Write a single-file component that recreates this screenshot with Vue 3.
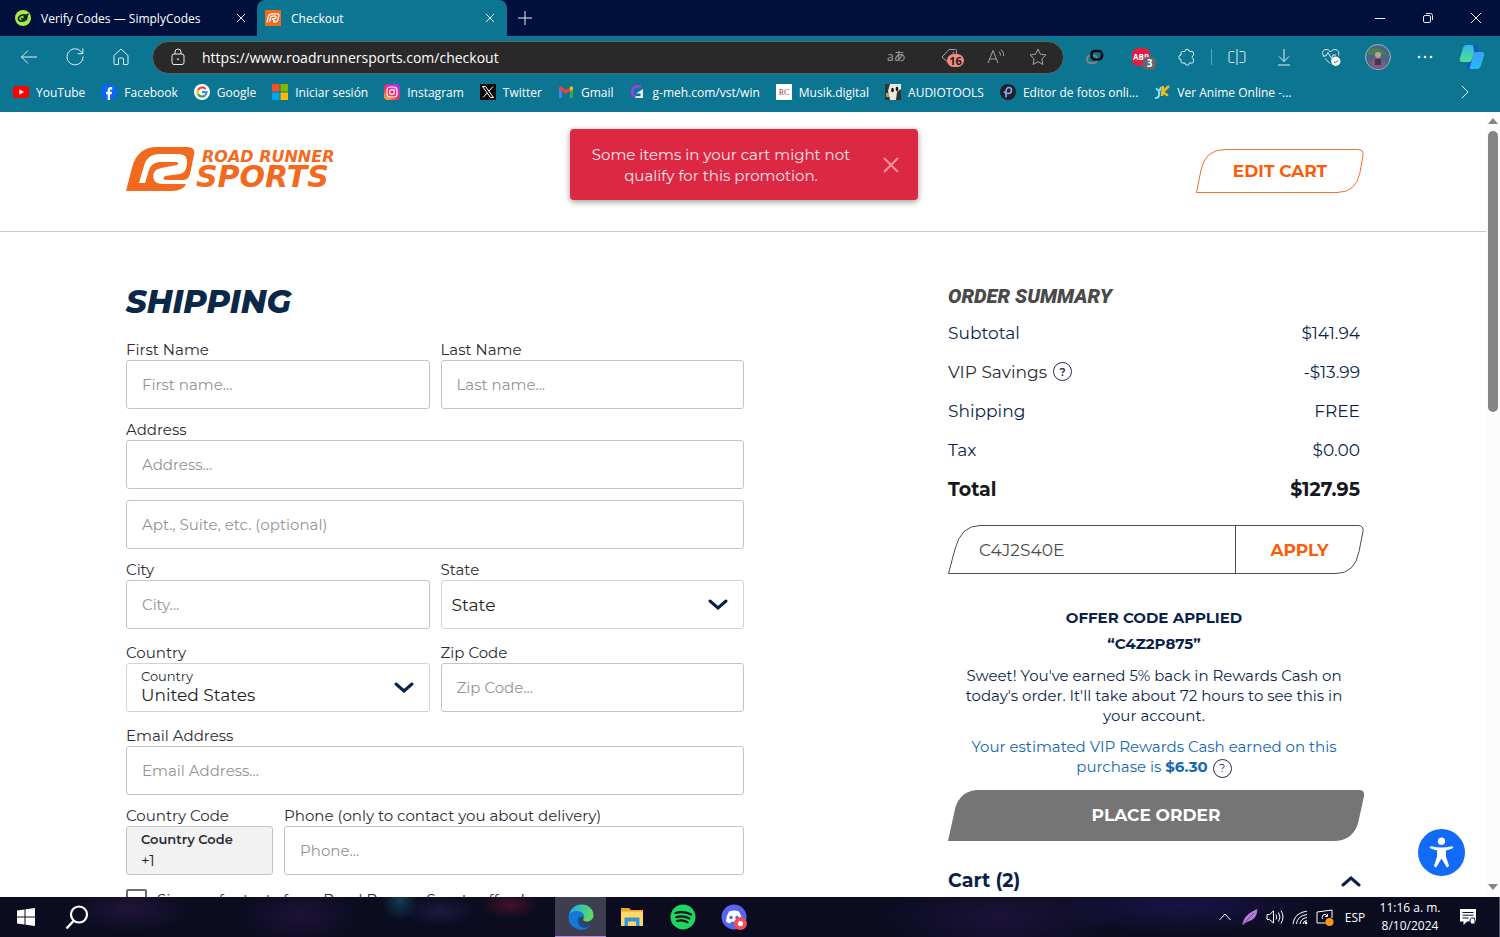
<script setup>
import { ref } from "vue";

// Links on the favourites bar, in display order.
const bookmarks = [
    { id: "youtube", label: "YouTube" },
    { id: "facebook", label: "Facebook" },
    { id: "google", label: "Google" },
    { id: "microsoft", label: "Iniciar sesión" },
    { id: "instagram", label: "Instagram" },
    { id: "x", label: "Twitter" },
    { id: "gmail", label: "Gmail" },
    { id: "gmeh", label: "g-meh.com/vst/win" },
    { id: "musik", label: "Musik.digital" },
    { id: "audio", label: "AUDIOTOOLS" },
    { id: "editor", label: "Editor de fotos onli..." },
    { id: "anime", label: "Ver Anime Online -..." },
];

const summary = [
    { label: "Subtotal", value: "$141.94" },
    { label: "VIP Savings", value: "-$13.99", help: true },
    { label: "Shipping", value: "FREE" },
    { label: "Tax", value: "$0.00" },
];

const url = ref("https://www.roadrunnersports.com/checkout");
const promoCode = ref("C4J2S40E");
const state = ref("State");
const country = ref("United States");
const toastOpen = ref(true);
const cartOpen = ref(true);
</script>

<template>
    <div class="desktop">
        <header class="browser">
            <div class="tabs">
                <div class="tab">
                    <svg class="favicon" viewBox="0 0 16 16">
                        <circle cx="8" cy="8" r="8" fill="#a6ee4f" />
                        <path
                            d="M13.500 4 8.500 7.500M12 6.500C11 4 6 4.500 4 7c-1.500 2 0 4.500 3 4.200 3-.3 5-2.200 5-4.200L7.500 9.500 6 8"
                            fill="none"
                            stroke="#14240a"
                            stroke-width="1.600"
                        />
                    </svg>
                    <span class="tab-title">Verify Codes — SimplyCodes</span>
                    <button class="tab-close" type="button" aria-label="Close tab">
                        <svg viewBox="0 0 10 10"><path d="M1 1l8 8M9 1 1 9" /></svg>
                    </button>
                </div>
                <div class="tab tab-active">
                    <svg class="favicon" viewBox="0 0 16 16">
                        <rect width="16" height="16" fill="#f36a1f" />
                        <path
                            d="M2 12.500 3.200 7C3.700 4.500 5 3.800 7 3.800h5.500c1.300 0 1.600.8 1.300 2l-.7 3.400c-.4 2-1.500 3-3.500 3H8M4.500 12l.9-4c.3-1.300.9-1.800 2-1.800h3c1.300 0 1.100 1.900-.2 2.100L7.500 9l2.500 2.500"
                            fill="none"
                            stroke="#fff"
                            stroke-width="1.200"
                        />
                    </svg>
                    <span class="tab-title">Checkout</span>
                    <button class="tab-close" type="button" aria-label="Close tab">
                        <svg viewBox="0 0 10 10"><path d="M1 1l8 8M9 1 1 9" /></svg>
                    </button>
                </div>
                <button class="tab-new" type="button" aria-label="New tab">
                    <svg viewBox="0 0 14 14"><path d="M7 0v14M0 7h14" /></svg>
                </button>
                <div class="window-controls">
                    <button type="button" aria-label="Minimize">
                        <svg viewBox="0 0 12 12"><path d="M1 6.500h10" /></svg>
                    </button>
                    <button type="button" aria-label="Restore">
                        <svg viewBox="0 0 12 12">
                            <rect x="1.500" y="3.500" width="7" height="7" rx="1.500" />
                            <path d="M4 1.500h4.500a2 2 0 0 1 2 2V8" />
                        </svg>
                    </button>
                    <button type="button" aria-label="Close">
                        <svg viewBox="0 0 12 12"><path d="M1 1l10 10M11 1 1 11" /></svg>
                    </button>
                </div>
            </div>

            <div class="toolbar">
                <button class="nav-btn" type="button" aria-label="Back">
                    <svg viewBox="0 0 20 20"><path d="M18 10H2.500M9 3.500 2.500 10 9 16.500" /></svg>
                </button>
                <button class="nav-btn" type="button" aria-label="Refresh">
                    <svg viewBox="0 0 20 20">
                        <path d="M18 9.500A8 8 0 1 1 15.500 4L17.800 6.500M17.800 1.500v5.200h-5.200" />
                    </svg>
                </button>
                <button class="nav-btn" type="button" aria-label="Home">
                    <svg viewBox="0 0 20 20">
                        <path d="M3 8.500 10 2l7 6.500v8a1 1 0 0 1-1 1h-3.500V12a1 1 0 0 0-1-1h-3a1 1 0 0 0-1 1v5.500H4a1 1 0 0 1-1-1z" />
                    </svg>
                </button>

                <div class="address">
                    <svg class="lock" viewBox="0 0 16 18">
                        <rect x="2" y="6" width="12" height="10.500" rx="2" />
                        <path d="M5 6V4a3 3 0 0 1 6 0v2" />
                        <circle cx="8" cy="11.200" r=".6" />
                    </svg>
                    <input v-model="url" type="text" aria-label="Address bar" />
                    <span class="translate">aあ</span>
                    <button class="address-btn coupons" type="button" aria-label="Coupons">
                        <svg viewBox="0 0 20 20">
                            <path d="M2 10 9 2.500h6.500q1 0 1 1V10L10 17z" />
                            <circle cx="13.500" cy="5.800" r=".6" />
                        </svg>
                        <span class="coupon-count">16</span>
                    </button>
                    <button class="address-btn" type="button" aria-label="Read aloud">
                        <svg viewBox="0 0 20 20">
                            <path d="M2 16 7 3.500 12 16M3.700 12h6.600M13 4.500q1.500 1.500 1.500 4M15 2.500q3 2.500 2.800 6.500" />
                        </svg>
                    </button>
                    <button class="address-btn" type="button" aria-label="Add to favourites">
                        <svg viewBox="0 0 20 20">
                            <path d="m10 2 2.400 5.200 5.600.7-4.100 3.900 1 5.700-4.900-2.800-4.900 2.800 1-5.700L2 7.900l5.600-.7z" />
                        </svg>
                    </button>
                </div>

                <div class="extensions">
                    <button class="ext-btn" type="button" aria-label="Link extension">
                        <svg viewBox="0 0 20 20">
                            <rect x="2" y="8.500" width="10" height="7.500" rx="3.500" stroke="#7b868b" stroke-width="2" />
                            <rect x="6.500" y="4" width="10.500" height="8.500" rx="3.500" stroke="#0a0d12" stroke-width="2.600" />
                        </svg>
                    </button>
                    <button class="ext-btn adblock" type="button" aria-label="Adblock Plus">
                        <span class="adblock-logo">ABP</span>
                        <span class="adblock-count">3</span>
                    </button>
                    <button class="ext-btn" type="button" aria-label="Extensions">
                        <svg viewBox="0 0 20 20">
                            <path d="M8 4.500a2.200 2.200 0 0 1 4.400 0H15a1.500 1.500 0 0 1 1.500 1.500v2.500a1.800 1.800 0 0 0 0 3.500v2.500A1.500 1.500 0 0 1 15 16h-2.600a2.200 2.200 0 0 1-4.400 0H5.500A1.500 1.500 0 0 1 4 14.500v-2a2.200 2.200 0 0 1 0-4.500V6a1.500 1.500 0 0 1 1.500-1.500z" />
                        </svg>
                    </button>
                </div>
                <span class="toolbar-sep"></span>
                <div class="actions">
                    <button class="action-btn" type="button" aria-label="Split screen">
                        <svg viewBox="0 0 20 20">
                            <path d="M10 2v16M7.500 4.500h-4a1.500 1.500 0 0 0-1.500 1.500v8a1.500 1.500 0 0 0 1.500 1.500h4M12.500 4.500h4A1.500 1.500 0 0 1 18 6v8a1.500 1.500 0 0 1-1.500 1.500h-4" />
                        </svg>
                    </button>
                    <button class="action-btn" type="button" aria-label="Downloads">
                        <svg viewBox="0 0 20 20"><path d="M10 2v12.500M5 9.500l5 5 5-5M4 18h12" /></svg>
                    </button>
                    <button class="action-btn" type="button" aria-label="Browser essentials">
                        <svg viewBox="0 0 20 20">
                            <path d="M3 9C0 6 2 2.500 5 2.500 7 2.500 8.500 3.500 9.500 5 10.500 3.500 12 2.500 14 2.500c3 0 4.500 3 3.500 6M1.500 9H5l2-3.500 3.500 6L12 8h3M4 11.500l5 5" />
                            <circle cx="14.800" cy="14.300" r="4.700" fill="#fff" stroke="none" />
                            <path d="m12.700 14.300 1.600 1.600 2.800-2.800" stroke="#0c7592" />
                        </svg>
                    </button>
                    <button class="action-btn" type="button" aria-label="Profile">
                        <svg class="avatar" viewBox="0 0 26 26">
                            <circle cx="13" cy="13" r="12.500" fill="#466683" stroke="#9fb5b3" stroke-width="1" />
                            <path d="M3 7q7-6 16 0l4 4-5-1-4 2-6-2-4 2z" fill="#4f7d57" />
                            <circle cx="13" cy="11" r="3" fill="#b7a68f" />
                            <path d="M4 19q4-6 9-5t9 5q-3 6-9 6t-9-6z" fill="#7b5b7e" />
                            <path d="M10 15h6v6h-6z" fill="#443653" />
                        </svg>
                    </button>
                    <button class="action-btn" type="button" aria-label="Settings and more">
                        <svg class="dots" viewBox="0 0 20 20">
                            <circle cx="4" cy="10" r="1.300" />
                            <circle cx="10" cy="10" r="1.300" />
                            <circle cx="16" cy="10" r="1.300" />
                        </svg>
                    </button>
                    <button class="action-btn" type="button" aria-label="Copilot">
                        <svg class="copilot" viewBox="0 0 26 26">
                            <defs>
                                <linearGradient id="copilot-a" x1="0" y1="0" x2="0" y2="1">
                                    <stop offset="0" stop-color="#31b6ee" />
                                    <stop offset="1" stop-color="#54e08a" />
                                </linearGradient>
                                <linearGradient id="copilot-b" x1="0" y1="0" x2="0" y2="1">
                                    <stop offset="0" stop-color="#3f9cff" />
                                    <stop offset="1" stop-color="#21c0f5" />
                                </linearGradient>
                            </defs>
                            <path d="M7 1h9q2 0 1 3l-4 11q-1 3-3 3H3q-3 0-2-4L4 4q1-3 3-3z" fill="url(#copilot-a)" />
                            <path d="M14 1h2.500q2 0 2.500 3l1 4h-5z" fill="#1555c4" />
                            <path d="M16.500 8H23q3 0 2 4l-3 9q-1 4-4 4h-6q-2 0-1-3l3.500-11q1-3 2-3z" fill="url(#copilot-b)" />
                            <path d="M10 18h2.500L10 25q-3-1-2.500-4z" fill="#1555c4" />
                        </svg>
                    </button>
                </div>
            </div>

            <nav class="bookmarks">
                <a v-for="item in bookmarks" :key="item.id" class="bookmark" href="#">
                    <svg class="favicon" viewBox="0 0 16 16">
                        <template v-if="item.id === 'youtube'">
                            <rect y="2" width="16" height="12" rx="3" fill="#f00" />
                            <path d="M6.300 5.300v5.400L11 8z" fill="#fff" />
                        </template>
                        <template v-else-if="item.id === 'facebook'">
                            <circle cx="8" cy="8" r="8" fill="#0866ff" />
                            <path d="M6.700 16V10.300H5V7.800h1.700V6.500C6.700 4 8 3 9.800 3c.6 0 1 .1 1.400.2v2.200h-1c-1 0-1.200.6-1.200 1.300v1.100h2.100l-.4 2.500H9V16z" fill="#fff" />
                        </template>
                        <template v-else-if="item.id === 'google'">
                            <circle cx="8" cy="8" r="8" fill="#fff" />
                            <g fill="none" stroke-width="2.200">
                                <path d="M11.500 5.100A4.500 4.500 0 0 0 4 6" stroke="#ea4335" />
                                <path d="M4 6a4.500 4.500 0 0 0 0 4" stroke="#fbbc05" />
                                <path d="M4 10a4.500 4.500 0 0 0 7 1.400" stroke="#34a853" />
                                <path d="M11 11.400A4.500 4.500 0 0 0 12.500 8H8" stroke="#4285f4" />
                            </g>
                        </template>
                        <template v-else-if="item.id === 'microsoft'">
                            <path d="M0 0h7.500v7.500H0z" fill="#f25022" />
                            <path d="M8.500 0H16v7.500H8.500z" fill="#7fba00" />
                            <path d="M0 8.500h7.500V16H0z" fill="#00a4ef" />
                            <path d="M8.500 8.500H16V16H8.500z" fill="#ffb900" />
                        </template>
                        <template v-else-if="item.id === 'instagram'">
                            <defs>
                                <linearGradient id="ig" x1="0" y1="1" x2=".7" y2="0">
                                    <stop offset="0" stop-color="#ffd23f" />
                                    <stop offset=".45" stop-color="#fb2d55" />
                                    <stop offset="1" stop-color="#b62be8" />
                                </linearGradient>
                            </defs>
                            <rect width="16" height="16" rx="4" fill="url(#ig)" />
                            <rect x="3" y="3" width="10" height="10" rx="3" fill="none" stroke="#fff" stroke-width="1.200" />
                            <circle cx="8" cy="8" r="2.400" fill="none" stroke="#fff" stroke-width="1.200" />
                            <circle cx="11" cy="5" r=".7" fill="#fff" />
                        </template>
                        <template v-else-if="item.id === 'x'">
                            <rect width="16" height="16" fill="#080808" />
                            <path d="M2.500 2.500h3l8 11h-3zM13 2.500 8.900 7.200M7.200 9 3 13.500" fill="none" stroke="#fff" />
                        </template>
                        <template v-else-if="item.id === 'gmail'">
                            <path d="M1 4v10h3V6z" fill="#4285f4" />
                            <path d="M15 4v10h-3V6z" fill="#34a853" />
                            <path d="M1 5.500V3.500Q2.500 1.500 4 3l4 3 4-3v4L8 10 4 7z" fill="#ea4335" />
                            <path d="M12 7V3q1.800-1.500 3 .5v2z" fill="#fbbc04" />
                        </template>
                        <template v-else-if="item.id === 'gmeh'">
                            <path d="M11 2.500Q4 1 2.500 6.500 1.500 11 5.500 13" fill="none" stroke="#a63be8" stroke-width="2.500" />
                            <path d="M13 5 6 9.500h4.500V12H6l-1 2h8z" fill="#e5eef8" />
                        </template>
                        <template v-else-if="item.id === 'musik'">
                            <rect width="16" height="16" fill="#fff" />
                            <text x="8" y="11" text-anchor="middle" font-family="Liberation Serif, serif" font-size="8" fill="#a0344a">RC</text>
                        </template>
                        <template v-else-if="item.id === 'audio'">
                            <rect width="16" height="16" fill="#e8eadf" />
                            <path d="M0 0h5L3 7l2 9H0zM12 8l4-3v11h-5z" fill="#30352f" />
                            <ellipse cx="7.500" cy="6" rx="1.300" ry="2.200" fill="#101010" />
                            <ellipse cx="12" cy="5" rx="1.300" ry="2.200" fill="#101010" />
                            <path d="M1 9h3v4H1z" fill="#a9a860" />
                        </template>
                        <template v-else-if="item.id === 'editor'">
                            <circle cx="8" cy="8" r="8" fill="#1c2028" />
                            <path d="M6 13.500V8.500Q6 3.500 9 3.500q2.500 0 2.500 2.700Q11.500 9.500 8 9.500q-3 0-4-2" fill="none" stroke="#8fa5ee" stroke-width="1.700" />
                        </template>
                        <template v-else>
                            <path d="M2 4.500 5 7v4q0 3-4 3M7 3 5.500 7" fill="none" stroke="#7fe3ff" stroke-width="2" />
                            <path d="M9 2 8 12M15 2 8.500 8 14 11.500" fill="none" stroke="#f6bd16" stroke-width="2.500" />
                        </template>
                    </svg>
                    {{ item.label }}
                </a>
                <button class="bookmarks-more" type="button" aria-label="More favourites">
                    <svg viewBox="0 0 8 14"><path d="m1 1 6 6-6 6" /></svg>
                </button>
            </nav>
        </header>

        <div class="viewport">
            <div class="page">
                <header class="site-header">
                    <a class="brand" href="#" aria-label="Road Runner Sports">
                        <svg viewBox="0 0 70 46">
                            <path d="M0 45 6 22Q11 1 31 1H61Q70 1 68 9L64 28Q63 33 58 34H41Q35 34 39 30L54 28Q60 27 61 18 62 8 53 8H34Q21 8 18 20L13 37H19L23 24Q25 17 33 16H50Q54 16 51 19L35 22Q25 24 28 34 30 38 37 38H60Q57 45 46 45z" fill="#f26a1e" />
                        </svg>
                        <span class="brand-text">
                            <span class="brand-top">ROAD RUNNER</span>
                            <span class="brand-bottom">SPORTS</span>
                        </span>
                    </a>
                    <button class="slanted edit-cart" type="button">
                        <svg viewBox="0 0 168 44" preserveAspectRatio="none">
                            <path d="M.5 43.500 5 21Q9 .5 29 .5H161q7 0 6 6l-3 17q-4 20-23 20z" />
                        </svg>
                        <span>EDIT CART</span>
                    </button>
                </header>

                <main class="checkout">
                    <form class="shipping" @submit.prevent>
                        <h1>SHIPPING</h1>
                        <div class="row">
                            <div class="field">
                                <label for="first-name">First Name</label>
                                <input id="first-name" type="text" placeholder="First name..." />
                            </div>
                            <div class="field">
                                <label for="last-name">Last Name</label>
                                <input id="last-name" type="text" placeholder="Last name..." />
                            </div>
                        </div>
                        <div class="field">
                            <label for="address">Address</label>
                            <input id="address" type="text" placeholder="Address..." />
                        </div>
                        <div class="field">
                            <input type="text" aria-label="Apartment" placeholder="Apt., Suite, etc. (optional)" />
                        </div>
                        <div class="row row-spaced">
                            <div class="field">
                                <label for="city">City</label>
                                <input id="city" type="text" placeholder="City..." />
                            </div>
                            <div class="field">
                                <label for="state">State</label>
                                <div class="select-box">
                                    <select id="state" v-model="state">
                                        <option>State</option>
                                        <option>California</option>
                                    </select>
                                    <svg class="chevron" viewBox="0 0 20 12"><path d="m2 2 8 7 8-7" /></svg>
                                </div>
                            </div>
                        </div>
                        <div class="row row-spaced">
                            <div class="field">
                                <label for="country">Country</label>
                                <div class="select-box">
                                    <select id="country" v-model="country" class="with-caption">
                                        <option>United States</option>
                                        <option>Canada</option>
                                    </select>
                                    <span class="caption">Country</span>
                                    <svg class="chevron" viewBox="0 0 20 12"><path d="m2 2 8 7 8-7" /></svg>
                                </div>
                            </div>
                            <div class="field">
                                <label for="zip">Zip Code</label>
                                <input id="zip" type="text" placeholder="Zip Code..." />
                            </div>
                        </div>
                        <div class="field">
                            <label for="email">Email Address</label>
                            <input id="email" type="email" placeholder="Email Address..." />
                        </div>
                        <div class="row row-phone row-spaced">
                            <div class="field">
                                <label for="country-code">Country Code</label>
                                <div class="select-box">
                                    <input id="country-code" class="with-caption" type="text" value="+1" disabled />
                                    <span class="caption caption-bold">Country Code</span>
                                </div>
                            </div>
                            <div class="field">
                                <label for="phone">Phone (only to contact you about delivery)</label>
                                <input id="phone" type="tel" placeholder="Phone..." />
                            </div>
                        </div>
                        <label class="texts">
                            <input type="checkbox" />
                            <span>Sign up for texts from Road Runner Sports offers!</span>
                        </label>
                    </form>

                    <aside class="summary">
                        <h2>ORDER SUMMARY</h2>
                        <dl>
                            <div v-for="line in summary" :key="line.label" class="line" :class="{ dark: line.help }">
                                <dt>
                                    {{ line.label }}
                                    <button v-if="line.help" class="help" type="button" aria-label="About VIP savings">?</button>
                                </dt>
                                <dd>{{ line.value }}</dd>
                            </div>
                            <div class="line total">
                                <dt>Total</dt>
                                <dd>$127.95</dd>
                            </div>
                        </dl>

                        <form class="slanted promo" @submit.prevent>
                            <svg viewBox="0 0 416 49" preserveAspectRatio="none">
                                <path d="M.5 48.500 7 24Q13 .5 32 .5H410q6 0 5 6l-4 20q-4 22-23 22zM287.500.5v48" />
                            </svg>
                            <div class="promo-fields">
                                <input v-model="promoCode" type="text" aria-label="Offer code" />
                                <button type="submit">APPLY</button>
                            </div>
                        </form>

                        <p class="offer">OFFER CODE APPLIED<br />“C4Z2P875”</p>
                        <p class="note">
                            Sweet! You've earned 5% back in Rewards Cash on<br />today's order. It'll take about 72
                            hours to see this in<br />your account.
                        </p>
                        <p class="note rewards">
                            Your estimated VIP Rewards Cash earned on this<br />purchase is <b>$6.30</b>
                            <button class="help" type="button" aria-label="About rewards cash">?</button>
                        </p>

                        <button class="slanted place-order" type="button">
                            <svg viewBox="0 0 416 51" preserveAspectRatio="none">
                                <path d="M0 51 7 19Q12 0 31 0H411q6 0 5 6l-5 23q-4 22-26 22z" />
                            </svg>
                            <span>PLACE ORDER</span>
                        </button>

                        <button class="cart-toggle" type="button" :aria-expanded="cartOpen" @click="cartOpen = !cartOpen">
                            Cart (2)
                            <svg class="chevron" viewBox="0 0 20 12"><path d="m2 10 8-7 8 7" /></svg>
                        </button>
                    </aside>
                </main>
            </div>

            <div class="scrollbar">
                <svg viewBox="0 0 10 6"><path d="M0 6 5 0l5 6z" /></svg>
                <span class="thumb"></span>
                <svg viewBox="0 0 10 6"><path d="M0 0h10L5 6z" /></svg>
            </div>

            <div v-if="toastOpen" class="toast" role="alert">
                <p>Some items in your cart might not<br />qualify for this promotion.</p>
                <button type="button" aria-label="Dismiss" @click="toastOpen = false">
                    <svg viewBox="0 0 16 16"><path d="m1 1 14 14M15 1 1 15" /></svg>
                </button>
            </div>

            <button class="accessibility" type="button" aria-label="Accessibility options">
                <svg viewBox="0 0 48 48">
                    <circle cx="24" cy="12.500" r="3.700" />
                    <path d="M13.500 17.500q10.500 3 21 0 1.800 0 1.500 2-2.500 1.500-7.500 2.500v6l3 9q.3 2-2 2.200l-5.500-9-5.500 9q-2.300-.2-2-2.200l3-9v-6q-5-1-7.500-2.500-.3-2 1.500-2z" />
                </svg>
            </button>
        </div>

        <footer class="taskbar">
            <button class="task" type="button" aria-label="Start">
                <svg class="start" viewBox="0 0 18 18">
                    <path d="M0 2.500 7.500 1.500V8.500H0zM8.500 1.300 18 0v8.500H8.500zM0 9.500h7.500v7L0 15.500zM8.500 9.500H18V18l-9.500-1.300z" fill="#fff" />
                </svg>
            </button>
            <button class="task" type="button" aria-label="Search">
                <svg viewBox="0 0 26 26">
                    <circle cx="15" cy="10.500" r="8" fill="none" stroke="#fff" stroke-width="2.200" />
                    <path d="M9.500 17 2.500 24.500" fill="none" stroke="#fff" stroke-width="2.500" />
                </svg>
            </button>
            <div class="apps">
                <button class="task task-active" type="button" aria-label="Microsoft Edge">
                    <svg viewBox="0 0 26 26">
                        <defs>
                            <linearGradient id="edge-top" x1="0" y1=".3" x2="1" y2=".5">
                                <stop offset="0" stop-color="#23a7e8" />
                                <stop offset="1" stop-color="#5fe05b" />
                            </linearGradient>
                        </defs>
                        <path d="M1 12C1.500 5 7 .5 13.500.5 20.500.5 25.500 5.500 25.500 11c0 4-3 6.500-7 6.500-3 0-4-1.500-3-3 1.500-3-.5-5.500-4-5.500S3 9.500 1 12z" fill="url(#edge-top)" />
                        <path d="M.5 14.500C0 9 5 6.500 10 7c4.500.5 6.500 4 5.500 7-3-3-6 0-4 4.500 2 4 7 5 11.500 2C19.500 26 13 27 8 24.500 3.500 22.500 1 19 .5 14.500z" fill="#1479d4" />
                        <path d="M11.500 12.500c-3 3-2 8 1.500 10.500 3 2 7.500.5 10-2.500-4.500 2.500-9.500 1-11-2.500-.9-2-.8-4-.5-5.500z" fill="#0c4fa5" />
                    </svg>
                </button>
                <button class="task" type="button" aria-label="File Explorer">
                    <svg viewBox="0 0 26 26">
                        <path d="M2 4h8l2 2h12v5H2z" fill="#e9a724" />
                        <path d="M2 7.500h22V22H2z" fill="#ffd766" />
                        <path d="M5.500 22v-8.500h15V22H17v-4.500H9V22z" fill="#3693d6" />
                    </svg>
                </button>
                <button class="task" type="button" aria-label="Spotify">
                    <svg viewBox="0 0 26 26">
                        <circle cx="13" cy="13" r="12.500" fill="#1ed760" />
                        <path d="M5.500 9q8-2.300 15.500 1.500M6.300 13.200q6.700-2 13 1.300M7 17q5.500-1.500 10.500 1.200" fill="none" stroke="#10151f" stroke-width="2.200" stroke-linecap="round" />
                    </svg>
                </button>
                <button class="task" type="button" aria-label="Discord">
                    <svg viewBox="0 0 26 26">
                        <circle cx="13" cy="13" r="12.500" fill="#5865f2" />
                        <path d="M8 7.500q5-2 10 0 3 4.500 3 10-2 1.500-4 2l-1-1.700H10L9 19.500q-2-.5-4-2 0-5.500 3-10z" fill="#fff" />
                        <circle cx="10" cy="13.500" r="1.700" fill="#5865f2" />
                        <circle cx="16" cy="13.500" r="1.700" fill="#5865f2" />
                        <circle cx="19.500" cy="19.500" r="6.500" fill="#ef4f55" />
                        <circle cx="19.500" cy="19.500" r="2.600" fill="#fff" />
                    </svg>
                </button>
            </div>
            <div class="tray">
                <button type="button" aria-label="Hidden icons">
                    <svg viewBox="0 0 18 18"><path d="m3.500 12 5.500-6 5.500 6" /></svg>
                </button>
                <button type="button" aria-label="Feather">
                    <svg viewBox="0 0 18 18">
                        <path d="M1.500 17Q2 7 16.500 1 16 12 6 14z" fill="#b77bdc" stroke="none" />
                        <path d="M1.500 17 13 5" stroke="#6d3f96" />
                    </svg>
                </button>
                <button type="button" aria-label="Volume">
                    <svg viewBox="0 0 18 18">
                        <path d="M1 6.500h2.500l4-3.500v12l-4-3.500H1zM10 6.500q1.500 2.500 0 5M12.500 4.500q3 4.500 0 9M15 2.500q4 6.500 0 13" />
                    </svg>
                </button>
                <button type="button" aria-label="Network">
                    <svg viewBox="0 0 18 18">
                        <path d="M2 16Q3 5 16 3M5.500 16Q6 8 16 6.500M9 16q.5-5.500 7-6.500M12 16q0-3 4-3.500" />
                        <circle cx="15" cy="15" r="1.300" fill="#fff" stroke="none" />
                    </svg>
                </button>
                <button type="button" aria-label="Windows Update">
                    <svg viewBox="0 0 18 18">
                        <path d="M10 15H1V4l15-2v8M11.500 6v2.500H9M11 8Q9.500 5 7 7q-2 2.500 0 4" />
                        <circle cx="13.500" cy="14" r="4" fill="#ff9812" stroke="none" />
                    </svg>
                </button>
                <span class="lang">ESP</span>
                <time class="clock">11:16 a. m.<br />8/10/2024</time>
                <button class="notifications" type="button" aria-label="Notifications">
                    <svg viewBox="0 0 18 18">
                        <path d="M1 1h16v12.500H8L4.500 17v-3.500H1z" fill="#fff" stroke="none" />
                        <path d="M3.500 4.500h11M3.500 7.200h11M3.500 10h6" stroke="#12122c" />
                        <path d="M11 14q0-5 3-4 1.500-1 2 2v4h-4z" stroke="#12122c" fill="#fff" />
                    </svg>
                </button>
                <span class="show-desktop"></span>
            </div>
        </footer>
    </div>
</template>

<style>
html,
body {
    margin: 0;
    overflow: hidden;
}
</style>

<style scoped>
.desktop {
    --teal: #0c7592;
    --navy: #0b1f4b;
    --orange: #f95d0c;
    --ui-font: "Segoe UI", "Open Sans", "Noto Sans CJK JP", sans-serif;
    height: 100vh;
    display: flex;
    flex-direction: column;
    background: #fff;
    font-family: Montserrat, Inter, sans-serif;
    color: #2b2d33;
}

*,
*::before {
    box-sizing: border-box;
}

button,
input,
select {
    font: inherit;
    color: inherit;
    margin: 0;
}

button {
    display: flex;
    align-items: center;
    justify-content: center;
    padding: 0;
    border: 0;
    background: none;
}

a {
    color: inherit;
    text-decoration: none;
}

svg {
    flex: none;
    display: block;
}

.favicon {
    width: 16px;
    height: 16px;
}

/* Browser chrome */
.browser {
    flex: none;
    background: var(--teal);
    font-family: var(--ui-font);
    font-size: 12px;
    color: #fff;
}

.browser button svg,
.lock {
    fill: none;
    stroke: #e4f1f5;
}

.tabs {
    display: flex;
    height: 36px;
    background: #000f3c;
}

.tab {
    width: 257px;
    display: flex;
    align-items: center;
    padding: 0 8px 0 15px;
}

.tab-active {
    width: 250px;
    padding: 0 9px 0 8px;
    border-radius: 8px 8px 0 0;
    background: var(--teal);
}

.tab-title {
    flex: 1;
    margin-left: 10px;
    white-space: nowrap;
}

.tab-close {
    width: 16px;
    height: 16px;
}

.tab-close svg {
    width: 10px;
    height: 10px;
}

.tab-new {
    width: 36px;
}

.tab-new svg {
    width: 14px;
    height: 14px;
}

.window-controls {
    display: flex;
    margin-left: auto;
}

.window-controls button {
    width: 48px;
}

.window-controls svg {
    width: 12px;
    height: 12px;
}

.toolbar {
    display: flex;
    align-items: center;
    height: 42px;
    padding: 0 5px 0 6px;
}

.toolbar button svg {
    width: 20px;
    height: 20px;
}

.nav-btn {
    width: 46px;
}

.address {
    flex: 1;
    min-width: 0;
    height: 33px;
    margin: 0 8px;
    display: flex;
    align-items: center;
    border: 1px solid #56676d;
    border-radius: 17px;
    background: #292929;
    padding: 0 4px 0 17px;
}

.lock {
    width: 16px;
    height: 18px;
}

.address input {
    flex: 1;
    min-width: 0;
    margin-left: 16px;
    padding: 0;
    border: 0;
    background: none;
    font-size: 14px;
    outline: 0;
}

.translate {
    width: 38px;
    font-size: 12px;
    line-height: 16px;
    color: #a5a5a5;
}

.address-btn {
    width: 42px;
    position: relative;
}

.browser .address-btn svg {
    stroke: #a5a5a5;
}

.coupons {
    width: 50px;
}

.coupon-count {
    position: absolute;
    left: 22px;
    top: 7px;
    width: 17px;
    border-radius: 7px;
    background: #f28b82;
    color: #1d1d1d;
    font-size: 11px;
    font-weight: 700;
    line-height: 13px;
}

.extensions,
.actions {
    display: flex;
}

.ext-btn {
    width: 46px;
    position: relative;
}

.action-btn {
    width: 47px;
}

.adblock-logo {
    width: 18px;
    border-radius: 6px;
    background: #e21e44;
    font-size: 8px;
    font-weight: 700;
    line-height: 18px;
}

.adblock-count {
    position: absolute;
    left: 25px;
    top: 10px;
    width: 13px;
    border-radius: 4px;
    background: #62666a;
    font-size: 10px;
    font-weight: 700;
    line-height: 13px;
}

.toolbar-sep {
    width: 1px;
    height: 16px;
    margin: 0 1px;
    background: #5ba3b7;
}

.toolbar .avatar,
.toolbar .copilot {
    width: 26px;
    height: 26px;
}

.copilot,
.avatar {
    stroke-width: 0;
}

.toolbar .dots {
    fill: #fff;
    stroke: none;
}

.bookmarks {
    display: flex;
    align-items: center;
    gap: 16px;
    height: 34px;
    padding: 0 31px 6px 13px;
}

.bookmark {
    display: flex;
    align-items: center;
    gap: 7px;
    white-space: nowrap;
}

.bookmarks-more {
    margin-left: auto;
}

.bookmarks-more svg {
    width: 8px;
    height: 14px;
}

/* Page area with its scrollbar */
.viewport {
    flex: 1;
    min-height: 0;
    display: flex;
    position: relative;
    overflow: hidden;
}

.page {
    flex: 1;
    min-width: 0;
}

.scrollbar {
    width: 14px;
    display: flex;
    flex-direction: column;
    align-items: center;
    padding: 6px 0 7px;
    background: #fcfcfc;
}

.scrollbar svg {
    width: 10px;
    height: 6px;
    fill: #858585;
}

.thumb {
    width: 10px;
    height: 281px;
    margin: 7px 0 auto;
    border-radius: 5px;
    background: #858585;
}

.site-header {
    display: flex;
    align-items: center;
    justify-content: space-between;
    height: 120px;
    padding: 0 122px 2px 126px;
    border-bottom: 1px solid #c9c9c9;
}

.brand {
    display: flex;
    align-items: center;
    padding-bottom: 4px;
    color: #f26a1e;
    font-family: "DejaVu Sans", sans-serif;
    font-weight: 700;
    font-style: italic;
}

.brand svg {
    width: 70px;
    height: 46px;
}

.brand-text {
    display: flex;
    flex-direction: column;
}

.brand-top {
    padding-left: 6px;
    font-size: 16px;
    line-height: 16px;
}

.brand-bottom {
    font-size: 30px;
    line-height: 24px;
}

/* Outline svg and content share one grid cell */
.slanted {
    display: grid;
    place-items: center;
}

.slanted > * {
    grid-area: 1 / 1;
}

.slanted > svg {
    width: 100%;
    height: 100%;
    fill: #fff;
}

.edit-cart {
    width: 168px;
    height: 44px;
    color: var(--orange);
    font-size: 17px;
    font-weight: 700;
}

.edit-cart svg {
    stroke: #f0702d;
}

.checkout {
    display: grid;
    grid-template-columns: minmax(0, 618fr) minmax(0, 416fr);
    gap: 204px;
    padding: 50px 122px 0 126px;
}

.shipping {
    display: flex;
    flex-direction: column;
    gap: 11px;
}

h1 {
    margin: 0 0 7px;
    color: #0c2848;
    font-size: 32px;
    font-style: italic;
    font-weight: 800;
    line-height: 40px;
}

.row {
    display: grid;
    grid-template-columns: 1fr 1fr;
    gap: 11px;
}

.row-phone {
    grid-template-columns: 147px 1fr;
}

.row-spaced {
    margin-bottom: 3px;
}

.field {
    display: flex;
    flex-direction: column;
    min-width: 0;
}

.field label {
    font-size: 15px;
    line-height: 20px;
    white-space: nowrap;
}

.field input,
.field select {
    width: 100%;
    height: 49px;
    padding: 0 15px;
    border: 1px solid #c4c4c4;
    border-radius: 3px;
    background: #fff;
    font-size: 15px;
}

.field input::placeholder {
    color: #949494;
    opacity: 1;
}

.select-box {
    display: grid;
}

.select-box > * {
    grid-area: 1 / 1;
}

.field select {
    appearance: none;
    padding: 0 10px;
    border-color: #d3d3d3;
    font-size: 17px;
    color: #1e1e22;
}

.field .with-caption {
    padding: 14px 14px 0;
}

.field input.with-caption {
    padding-top: 20px;
    background: #f2f2f2;
    color: #1e1e22;
    font-size: 15px;
}

.caption {
    margin: 5px 15px;
    font-size: 13px;
    line-height: 16px;
    pointer-events: none;
}

.caption-bold {
    font-weight: 600;
}

.chevron {
    width: 20px;
    height: 12px;
    fill: none;
    stroke: #0b1f4b;
    stroke-width: 3;
    stroke-linecap: round;
}

.select-box .chevron {
    place-self: center end;
    margin-right: 16px;
    pointer-events: none;
}

.texts {
    display: flex;
    align-items: flex-start;
    gap: 10px;
    font-size: 15px;
    line-height: 22px;
}

.texts input {
    width: 21px;
    height: 21px;
    appearance: none;
    border: 2px solid #6d6d6d;
    border-radius: 2px;
}

.summary {
    color: var(--navy);
}

h2 {
    margin: 0 0 3px;
    color: #4a4a4a;
    font-family: Roboto, sans-serif;
    font-size: 20px;
    font-style: italic;
    font-weight: 900;
    line-height: 28px;
}

dl,
dd {
    margin: 0;
}

.line {
    display: flex;
    align-items: center;
    justify-content: space-between;
    height: 39px;
    padding-right: 4px;
    font-size: 17px;
}

.line dt {
    display: flex;
    align-items: center;
    gap: 6px;
}

.dark dt {
    color: #2b2d33;
}

.total {
    height: 41px;
    color: #17181c;
    font-size: 19px;
    font-weight: 700;
}

.help {
    width: 19px;
    height: 19px;
    border: 1px solid #26284f;
    border-radius: 50%;
    color: #26284f;
    font-size: 11px;
    font-weight: 600;
}

.promo {
    height: 49px;
    margin-top: 15px;
}

.promo > svg {
    stroke: #4c4c4c;
}

.promo-fields {
    width: 100%;
    height: 100%;
    display: flex;
}

.promo input {
    flex: 1;
    min-width: 0;
    padding: 0 0 0 31px;
    border: 0;
    background: none;
    color: #4a4a4a;
    font-size: 17px;
}

.promo button {
    width: 31%;
    color: var(--orange);
    font-size: 17px;
    font-weight: 700;
}

.offer {
    margin: 31px 4px 0 0;
    text-align: center;
    font-size: 15px;
    font-weight: 700;
    line-height: 26px;
}

.note {
    margin: 9px 4px 0 0;
    text-align: center;
    font-size: 15px;
    line-height: 20px;
    white-space: nowrap;
}

.rewards {
    margin-top: 11px;
    color: #1767b1;
}

.rewards .help {
    display: inline-flex;
    margin-left: 5px;
    font-weight: 400;
    vertical-align: middle;
}

.place-order {
    width: 100%;
    height: 51px;
    margin-top: 12px;
    color: #fff;
    font-size: 17px;
    font-weight: 700;
}

.place-order svg {
    fill: #757575;
}

.cart-toggle {
    width: 100%;
    justify-content: space-between;
    margin-top: 28px;
    padding-right: 3px;
    font-size: 19px;
    font-weight: 700;
    line-height: 24px;
}

.toast {
    position: absolute;
    top: 17px;
    left: 38%;
    width: 348px;
    height: 71px;
    display: flex;
    align-items: center;
    border-radius: 4px;
    background: #dc2842;
    box-shadow: 0 2px 6px rgba(0, 0, 0, 0.4);
    color: #ffe5ea;
}

.toast p {
    flex: 1;
    margin: 0;
    padding-left: 8px;
    text-align: center;
    font-size: 15px;
    line-height: 21px;
}

.toast button {
    width: 54px;
    height: 100%;
}

.toast svg {
    width: 16px;
    height: 16px;
    fill: none;
    stroke: #f7939f;
    stroke-width: 2;
}

.accessibility {
    position: absolute;
    right: 35px;
    bottom: 21px;
    width: 47px;
    height: 47px;
    border-radius: 50%;
    background: #126bf6;
}

.accessibility svg {
    width: 47px;
    height: 47px;
    fill: #fff;
}

/* Windows taskbar */
.taskbar {
    flex: none;
    display: flex;
    height: 40px;
    color: #fff;
    font-family: var(--ui-font);
    font-size: 12px;
    background:
        radial-gradient(ellipse 18px 20px at 400px 4px, #143b52, transparent),
        radial-gradient(ellipse 30px 14px at 510px 8px, #451027, transparent),
        radial-gradient(ellipse 60px 24px at 130px 12px, #211439, transparent),
        radial-gradient(ellipse 60px 30px at 300px 18px, #1d1236, transparent),
        radial-gradient(ellipse 36px 16px at 440px 14px, #1b1a40, transparent),
        radial-gradient(ellipse 140px 30px at 1180px 8px, #1a1347, transparent),
        radial-gradient(ellipse 120px 40px at 1000px 20px, #1b1238, transparent),
        #0b0c20;
}

.task {
    width: 51px;
}

.task svg {
    width: 26px;
    height: 26px;
}

.task .start {
    width: 18px;
    height: 18px;
}

.apps {
    display: flex;
    margin-left: 453px;
}

.task-active {
    background: #3d3e50;
    border-bottom: 1px solid #b58ad0;
}

.tray {
    display: flex;
    align-items: center;
    margin-left: auto;
}

.tray button {
    width: 25px;
}

.tray svg {
    width: 18px;
    height: 18px;
    fill: none;
    stroke: #fff;
}

.lang {
    width: 36px;
    text-align: center;
}

.clock {
    width: 74px;
    text-align: center;
    line-height: 18px;
    white-space: nowrap;
}

.tray .notifications {
    width: 41px;
}

.show-desktop {
    width: 12px;
    height: 40px;
    border-right: 1px solid #555670;
}
</style>
